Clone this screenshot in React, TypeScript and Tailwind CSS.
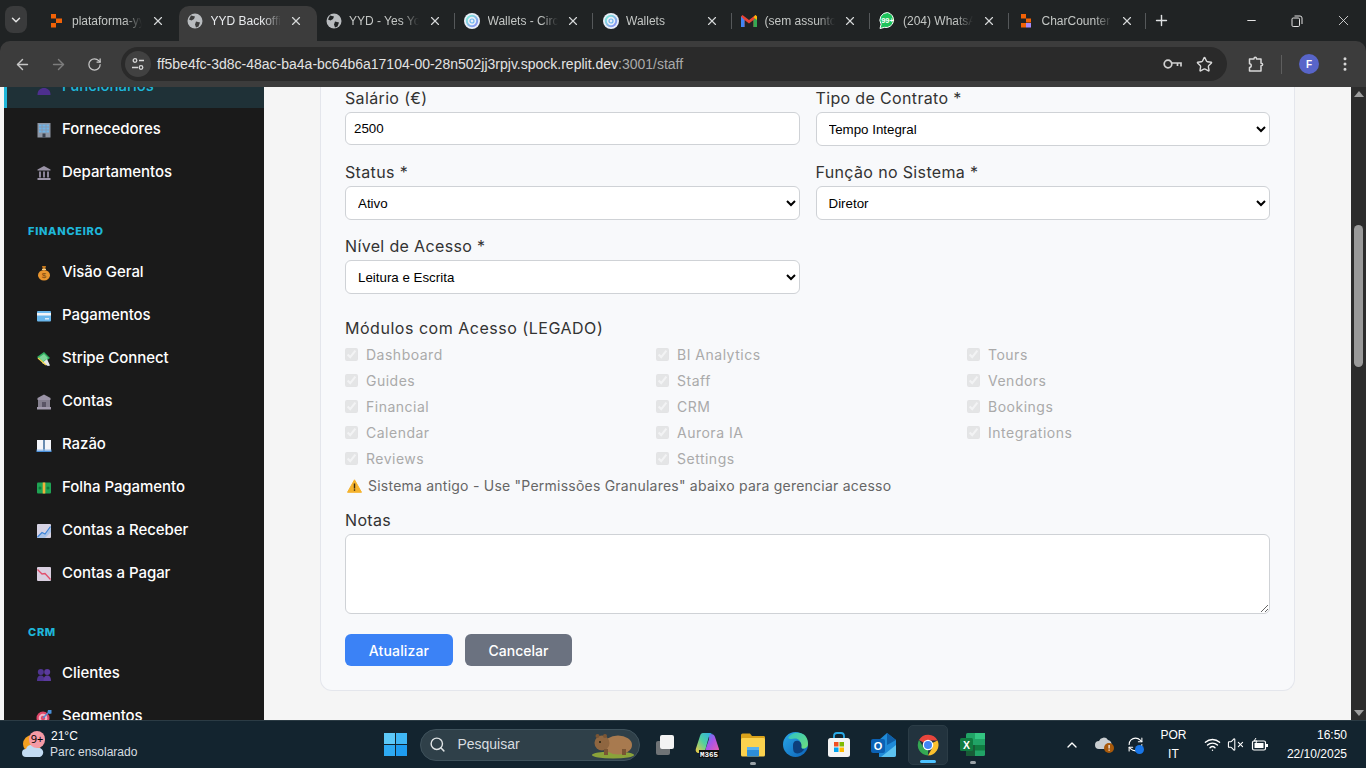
import React from "react";
import { X, Plus, ChevronDown, ArrowLeft, ArrowRight, RotateCw, Star, Minus, Search, ChevronUp, Wifi, VolumeX, EllipsisVertical, RefreshCw } from "lucide-react";

const Cubes = () => (
  <svg width="16" height="16" viewBox="0 0 16 16">
    <rect x="2" y="1" width="5" height="4.5" fill="#f26207" />
    <rect x="7" y="5.5" width="6" height="4.5" fill="#f26207" />
    <rect x="2" y="10" width="5" height="4.5" fill="#f26207" />
  </svg>
);
const Cubes2 = () => (
  <svg width="16" height="16" viewBox="0 0 16 16">
    <rect x="3" y="1" width="5" height="4.5" fill="#f26207" />
    <rect x="8" y="5.5" width="5" height="4" fill="#f26207" />
    <rect x="3" y="10" width="5" height="4.5" fill="#f26207" />
    <rect x="8" y="10" width="5" height="4.5" fill="#a78bfa" />
  </svg>
);
const GlobeIcon = () => (
  <svg width="16" height="16" viewBox="0 0 16 16">
    <circle cx="8" cy="8" r="7.5" fill="#b9bcbf" />
    <path d="M4 2.5 8 3.5 7 6 4.5 7.5 2 6.5ZM9 8.5l4 1-1.5 4-2.5 1-1-3Z" fill="#3c3c3c" />
  </svg>
);
const GlobeDark = () => (
  <svg width="16" height="16" viewBox="0 0 16 16">
    <circle cx="8" cy="8" r="7.5" fill="#b9bcbf" />
    <path d="M4 2.5 8 3.5 7 6 4.5 7.5 2 6.5ZM9 8.5l4 1-1.5 4-2.5 1-1-3Z" fill="#202324" />
  </svg>
);
const Circle = () => (
  <svg width="16" height="16" viewBox="0 0 16 16">
    <defs>
      <linearGradient id="cg" x1="0" y1="0" x2="1" y2="1">
        <stop offset="0" stopColor="#7ff0d8" />
        <stop offset="1" stopColor="#8b8cf5" />
      </linearGradient>
    </defs>
    <circle cx="8" cy="8" r="8" fill="#e9eef8" />
    <circle cx="8" cy="8" r="5.2" fill="none" stroke="url(#cg)" strokeWidth="2" />
    <circle cx="8" cy="8" r="2" fill="none" stroke="#6fb5ee" strokeWidth="1.2" />
  </svg>
);
const Gmail = () => (
  <svg width="16" height="14" viewBox="0 0 16 13">
    <path d="M0 2v10.5h3.5V5.5L8 9l4.5-3.5v7H16V2l-1.5-1.5L8 5.5 1.5.5Z" fill="#ea4335" />
    <path d="M0 2v10.5h3.5V5.5Z" fill="#4285f4" />
    <path d="M16 2v10.5h-3.5V5.5Z" fill="#34a853" />
    <path d="M12.5 2.8 14.5.5 16 2v3.5Z" fill="#fbbc04" />
  </svg>
);
const Whats = () => (
  <svg width="17" height="17" viewBox="0 0 17 17">
    <path d="M8.5.5a7.6 7.6 0 0 0-6.4 11.7L1 16.500l4.400-1.100A7.600 7.600 0 1 0 8.500.5Z" fill="#1fc45c" stroke="#fff" strokeWidth="1" />
    <text x="8.500" y="11" textAnchor="middle" fontSize="7.500" fontWeight="700" fill="#fff" fontFamily="Liberation Sans">99+</text>
  </svg>
);

const tabs = [
  { t: "plataforma-yyd", i: <Cubes /> },
  { t: "YYD Backoffice", i: <GlobeIcon />, active: true },
  { t: "YYD - Yes You Do", i: <GlobeDark /> },
  { t: "Wallets - Circle", i: <Circle />, sep: true },
  { t: "Wallets", i: <Circle />, sep: true },
  { t: "(sem assunto)", i: <Gmail />, sep: true },
  { t: "(204) WhatsApp", i: <Whats />, sep: true },
  { t: "CharCounter", i: <Cubes2 />, sep: true },
];

function TabStrip() {
  return (
    <div className="flex h-[41px] shrink-0 items-start bg-[#202324] font-['Liberation_Sans',sans-serif] text-[12px]">
      <div className="ml-[5px] mt-[6px] flex h-[27px] w-[22px] items-center justify-center rounded-lg bg-[#3a3b3c] text-[#e3e3e3]">
        <ChevronDown size={14} strokeWidth={2.5} />
      </div>
      <div className="ml-[13px] flex">
        {tabs.map((x) => (
          <div
            key={x.t}
            className={`relative flex w-[138.5px] items-center ${x.active ? "mt-[6px] h-[35px] rounded-t-[10px] bg-[#3c3c3c] pb-[6px] text-[#e8eaed]" : "h-[41px] text-[#c4c7c5]"}`}
          >
            {x.sep && <div className="absolute left-[-2px] top-[13px] h-[16px] w-px bg-[#55585a]" />}
            <div className="ml-[8px] flex w-[17px] justify-center">{x.i}</div>
            <div className="ml-[7px] w-[70px] overflow-hidden whitespace-nowrap [mask-image:linear-gradient(to_right,black_75%,transparent)]">
              {x.t}
            </div>
            <X size={14} strokeWidth={2} className="ml-[8.500px] text-[#d5d7d8]" />
          </div>
        ))}
      </div>
      <div className="relative ml-[-2px] mt-[12px] flex items-center text-[#dfe1e3]">
        <div className="absolute left-[-1px] top-[1px] h-[16px] w-px bg-[#55585a]" />
        <Plus size={17} className="ml-[7px]" />
      </div>
      <div className="ml-auto flex h-[41px] items-center text-[#e3e3e3]">
        <div className="flex w-[46px] justify-center"><Minus size={13} /></div>
        <div className="flex w-[46px] justify-center">
          <svg width="12" height="12" viewBox="0 0 12 12" fill="none" stroke="#e3e3e3" strokeWidth="1">
            <rect x="1" y="3" width="7.500" height="8.500" rx="1.200" />
            <path d="M3.500 1h5.500a2 2 0 0 1 2 2v6" />
          </svg>
        </div>
        <div className="flex w-[46px] justify-center"><X size={17} strokeWidth={1.2} /></div>
      </div>
    </div>
  );
}

function Toolbar() {
  return (
    <div className="flex h-[46px] shrink-0 items-center rounded-t-[10px] bg-[#3c3c3c] text-[#c7c7c7]">
      <div className="flex w-[40px] justify-center pl-[4px]"><ArrowLeft size={17} strokeWidth={2} /></div>
      <div className="flex w-[36px] justify-center text-[#7d7d7d]"><ArrowRight size={17} strokeWidth={2} /></div>
      <div className="flex w-[36px] justify-center"><RotateCw size={15} strokeWidth={2} /></div>
      <div className="ml-[9px] flex h-[34px] w-[1106px] items-center rounded-full bg-[#2a2a2a]">
        <div className="ml-[4px] flex h-[26px] w-[26px] items-center justify-center rounded-full bg-[#414141]">
          <svg width="14" height="14" viewBox="0 0 14 14" fill="none" stroke="#d8d8d8" strokeWidth="1.300">
            <circle cx="4" cy="3.500" r="1.800" />
            <path d="M8 3.500h5M1 10.500h6" />
            <circle cx="10" cy="10.500" r="1.800" />
          </svg>
        </div>
        <div className="ml-[6px] font-['Liberation_Sans',sans-serif] text-[14px] text-[#e3e3e3]">
          ff5be4fc-3d8c-48ac-ba4a-bc64b6a17104-00-28n502jj3rpjv.spock.replit.dev<span className="text-[#a9a9a9]">:3001/staff</span>
        </div>
        <div className="ml-auto flex items-center gap-[14px] pr-[14px]">
          <svg width="19" height="14" viewBox="0 0 19 14" fill="none" stroke="#d0d0d0" strokeWidth="1.700">
            <circle cx="5" cy="7" r="3.800" />
            <path d="M8.800 6h9.200v3.500M14.500 6v3" />
          </svg>
          <Star size={17} strokeWidth={2} className="text-[#d8d8d8]" />
        </div>
      </div>
      <div className="ml-[20px] flex items-center">
        <svg width="18" height="18" viewBox="0 0 18 18" fill="none" stroke="#d8d8d8" strokeWidth="1.500" strokeLinejoin="round">
          <path d="M2.500 4H7c0-2.200 2.500-2.200 2.500 0h4.500v4.200c2.200 0 2.200 2.600 0 2.600V16H2.500v-3.500c2.300 0 2.300-3.800 0-3.800Z" />
        </svg>
        <div className="ml-[16px] h-[19px] w-px bg-[#5e5e5e]" />
        <div className="ml-[17px] flex h-[20px] w-[20px] items-center justify-center rounded-full bg-[#5865c9] font-['Liberation_Sans',sans-serif] text-[10px] font-bold text-white">F</div>
        <EllipsisVertical size={18} className="ml-[17px] text-[#d8d8d8]" />
      </div>
    </div>
  );
}

const Em = ({ children }: { children: React.ReactNode }) => (
  <svg width="16" height="16" viewBox="0 0 16 16">{children}</svg>
);
const icons: Record<string, React.ReactNode> = {
  person: <Em><circle cx="8" cy="4" r="3.500" fill="#5b3a9e" /><path d="M1.500 16c0-5 3-7 6.500-7s6.500 2 6.500 7Z" fill="#4d2f8e" /></Em>,
  office: <Em><rect x="1.500" y="1" width="13" height="14.500" fill="#8e96a4" /><rect x="3" y="2.500" width="10" height="8" fill="#6fb4e8" /><path d="M3 5h10M3 8h10M6 2.500v8M10 2.500v8" stroke="#8e96a4" strokeWidth=".8" /><rect x="6.500" y="11.500" width="3" height="4" fill="#3b4350" /></Em>,
  bank: <Em><path d="M8 1 1.500 4.500v1h13v-1Z" fill="#9a93a6" /><path d="M3 6.500h2v6H3ZM7 6.500h2v6H7ZM11 6.500h2v6h-2Z" fill="#8a8396" /><rect x="1.500" y="13" width="13" height="2" fill="#9a93a6" /></Em>,
  money: <Em><path d="M6 1h4L9 4.500H7Z" fill="#c77a1e" /><ellipse cx="8" cy="10.200" rx="6" ry="5.300" fill="#e8952f" /><rect x="6" y="3.800" width="4" height="1.200" fill="#f4d28f" /><text x="8" y="13" textAnchor="middle" fontSize="8" fill="#7a4710" fontFamily="Liberation Sans">$</text></Em>,
  card: <Em><rect x="1" y="3" width="14" height="10.500" rx="1" fill="#6ab7ec" /><rect x="1" y="5" width="14" height="2.500" fill="#f3f4f6" /><rect x="9" y="10" width="4" height="1.500" fill="#d8eaf8" /></Em>,
  wing: <Em><path d="M1 6 8 1l6 6-7 5Z" fill="#2fae60" /><path d="M3 6.500 8 3l4 4-5 3.500Z" fill="#7ed69a" /><path d="M6 12l5-4 3 6.500-2 .5Z" fill="#e5e7eb" /><path d="M2 7l8 7" stroke="#f6d44b" strokeWidth="1.300" /></Em>,
  bank2: <Em><path d="M8 .5 1.500 4v2h13V4Z" fill="#9a93a6" /><rect x="2" y="6" width="12" height="7" fill="#85808f" /><rect x="6" y="8" width="4" height="5" fill="#5a5565" /><rect x="1" y="13" width="14" height="2.500" fill="#a29bad" /></Em>,
  book: <Em><path d="M1 3h6.500v10.500H1ZM8.500 3H15v10.500H8.500Z" fill="#f3f5fa" /><path d="M0.500 12.500v2.500h15v-2.500" fill="#4a8fd8" /><rect x="7.500" y="3" width="1" height="11.500" fill="#4a8fd8" /><path d="M1 13h6.500M8.500 13H15" stroke="#f3f5fa" /></Em>,
  cash: <Em><rect x="1" y="2.500" width="14" height="11" rx="1" fill="#1fa353" /><circle cx="4" cy="8" r="1.500" fill="#0e7a3a" /><circle cx="12" cy="8" r="1.500" fill="#0e7a3a" /><rect x="6.700" y="2.500" width="2.600" height="11" fill="#f0b13c" /></Em>,
  up: <Em><rect x="1" y="1" width="14" height="14" rx="1" fill="#d6d3e4" /><path d="M1 15 6 9.500l3 1.500L15 3v6l-5 5-1 1Z" fill="#a9c3e8" /><path d="M1.500 14 6 9.500l3 1.500 5.500-7.500" fill="none" stroke="#3d84d8" strokeWidth="1.200" /></Em>,
  down: <Em><rect x="1" y="1" width="14" height="14" rx="1" fill="#d9cfe0" /><path d="M1.500 3.500 6 8l3-.5 5.500 6" fill="none" stroke="#e24d6a" strokeWidth="1.300" /></Em>,
  people: <Em><circle cx="4.800" cy="6" r="3" fill="#4f3490" /><circle cx="11.200" cy="6" r="3" fill="#5b3a9e" /><path d="M1 15c0-4 1.500-5.500 3.800-5.500S8.500 11 8.500 15Z" fill="#4f3490" /><path d="M7.500 15c0-4 1.500-5.500 3.700-5.500S15 11 15 15Z" fill="#5b3a9e" /></Em>,
  target: <Em><circle cx="7" cy="9" r="6.500" fill="#e0476a" /><circle cx="7" cy="9" r="4.300" fill="#f3b5c4" /><circle cx="7" cy="9" r="2.200" fill="#e0476a" /><path d="M7 9 14 2" stroke="#4a8fd8" strokeWidth="1.500" /><path d="M12 1h3.500v3.500l-2 .5-2-2Z" fill="#4a8fd8" /></Em>,
};

function NavItem({ label, icon, active }: { label: string; icon: string; active?: boolean }) {
  return (
    <div className={`flex h-[43px] shrink-0 items-center text-[15px] font-medium tracking-[-0.05px] ${active ? "border-l-[3px] border-[#1fb6d9] bg-[#1f3137] pl-[29px] text-[#1fb6d9]" : "pl-[32px] text-white"}`}>
      <div className="flex w-[16px] justify-center">{icons[icon]}</div>
      <span className="ml-[10px]">{label}</span>
    </div>
  );
}
const Section = ({ t, top }: { t: string; top: string }) => (
  <div className={`pl-[24px] text-[11px] font-extrabold leading-[14px] tracking-[0.7px] text-[#1fb6d9] ${top}`}>{t}</div>
);

function Sidebar() {
  return (
    <div className="ml-[4px] w-[260px] shrink-0 overflow-hidden bg-[#1a1a1a] pt-0">
      <div className="-mt-[22px] flex flex-col">
        <NavItem label="Funcionários" icon="person" active />
        <NavItem label="Fornecedores" icon="office" />
        <NavItem label="Departamentos" icon="bank" />
        <Section t="FINANCEIRO" top="mt-[30px] mb-[13px]" />
        {[["Visão Geral", "money"], ["Pagamentos", "card"], ["Stripe Connect", "wing"], ["Contas", "bank2"], ["Razão", "book"], ["Folha Pagamento", "cash"], ["Contas a Receber", "up"], ["Contas a Pagar", "down"]].map(([l, i]) => (
          <NavItem key={l} label={l} icon={i} />
        ))}
        <Section t="CRM" top="mt-[30px] mb-[13px]" />
        <NavItem label="Clientes" icon="people" />
        <NavItem label="Segmentos" icon="target" />
      </div>
    </div>
  );
}

const inputCls = "w-full rounded-[6px] border border-[#cfd2d6] bg-white font-['Liberation_Sans',sans-serif] text-[13.333px] text-black";

function Field({ label, children }: { label: string; children: React.ReactNode }) {
  return (
    <div className="mb-[16px]">
      <div className="mb-[4px] h-[20px] text-[16px] leading-[20px] tracking-[0.35px] text-[#333]">{label}</div>
      {children}
    </div>
  );
}
const Sel = ({ v }: { v: string }) => (
  <select defaultValue={v} className={`${inputCls} h-[34px] pl-[8px] pr-[4px]`}>
    <option>{v}</option>
  </select>
);

const modules = ["Dashboard", "BI Analytics", "Tours", "Guides", "Staff", "Vendors", "Financial", "CRM", "Bookings", "Calendar", "Aurora IA", "Integrations", "Reviews", "Settings"];

function Warn() {
  return (
    <svg width="15" height="14" viewBox="0 0 15 14" className="mt-[1px]">
      <path d="M7.500 .8 14.500 13.300H.5Z" fill="#f5b32e" stroke="#f5b32e" strokeLinejoin="round" />
      <rect x="6.800" y="4.500" width="1.400" height="5" fill="#3a2a10" />
      <rect x="6.800" y="10.300" width="1.400" height="1.500" fill="#3a2a10" />
    </svg>
  );
}

function Main() {
  return (
    <div className="min-w-0 flex-1 overflow-hidden px-[56px]">
      <div className="rounded-b-[12px] border-x border-b border-[#e4e6ec] bg-[#f8f9fb] px-[24px] pb-[24px] pt-[1px]">
        <div className="grid grid-cols-2 gap-x-[16px]">
          <Field label="Salário (€)">
            <input readOnly value="2500" className={`${inputCls} mb-[1px] block h-[33px] px-[8px]`} />
          </Field>
          <Field label="Tipo de Contrato *"><Sel v="Tempo Integral" /></Field>
          <Field label="Status *"><Sel v="Ativo" /></Field>
          <Field label="Função no Sistema *"><Sel v="Diretor" /></Field>
          <Field label="Nível de Acesso *"><Sel v="Leitura e Escrita" /></Field>
        </div>
        <div className="mt-[8px] h-[20px] text-[16px] leading-[20px] tracking-[0.52px] text-[#333]">Módulos com Acesso (LEGADO)</div>
        <div className="mt-[3px] grid grid-cols-3 gap-x-[8px]">
          {modules.map((m) => (
            <label key={m} className="flex h-[26px] items-center text-[14px] tracking-[0.5px] text-[#aaa]">
              <input type="checkbox" checked disabled readOnly className="h-[13px] w-[13px] opacity-50" />
              <span className="ml-[8px]">{m}</span>
            </label>
          ))}
        </div>
        <div className="mt-[4px] flex h-[20px] items-center text-[14px] tracking-[0.23px] text-[#666]">
          <span className="ml-[2px] flex"><Warn /></span>
          <span className="ml-[6px]">Sistema antigo - Use "Permissões Granulares" abaixo para gerenciar acesso</span>
        </div>
        <div className="mb-[4px] mt-[15px] h-[20px] text-[16px] leading-[20px] tracking-[0.35px] text-[#333]">Notas</div>
        <textarea readOnly className="block h-[80px] w-full rounded-[6px] border border-[#cfd2d6] bg-white" />
        <div className="mt-[20px] flex gap-[12px] text-[14px] font-medium text-white">
          <div className="flex h-[32px] w-[108px] items-center justify-center rounded-[6px] bg-[#3b82f6] tracking-[0.15px]">Atualizar</div>
          <div className="flex h-[32px] w-[107px] items-center justify-center rounded-[6px] bg-[#6b7280]">Cancelar</div>
        </div>
      </div>
    </div>
  );
}

function Scrollbar() {
  return (
    <div className="flex w-[15px] shrink-0 flex-col items-center bg-[#2c2c2c]">
      <div className="mt-[4px] h-0 w-0 border-x-[5px] border-b-[6px] border-x-transparent border-b-[#9d9d9d]" />
      <div className="mt-[128px] h-[142px] w-[9px] rounded-full bg-[#9a9a9a]" />
      <div className="mb-[4px] mt-auto h-0 w-0 border-x-[5px] border-t-[6px] border-x-transparent border-t-[#9d9d9d]" />
    </div>
  );
}

const M365 = () => (
  <svg width="26" height="28" viewBox="0 0 26 28">
    <defs>
      <linearGradient id="m1" x1="0" y1="0" x2="1" y2="1"><stop offset="0" stopColor="#3f8ff0" /><stop offset=".45" stopColor="#a855e8" /><stop offset="1" stopColor="#f35fa5" /></linearGradient>
      <linearGradient id="m2" x1="1" y1="0" x2="0" y2="1"><stop offset="0" stopColor="#2aa8ee" /><stop offset=".5" stopColor="#4fd0a0" /><stop offset="1" stopColor="#f9c83c" /></linearGradient>
    </defs>
    <path d="M13 3h3c2 0 3.500 1.200 4 3l4 12c.6 2-.8 4-3 4h-8c-2 0-3-2-2.400-4L14 8c.4-1.500 0-4-1-5Z" fill="url(#m1)" />
    <path d="M8 2h10c-2 0-3.500 1.500-4.200 4l-3.300 12c-.6 2.500-2.300 4-4.500 4H3.500c-2 0-3.300-2-2.700-4L5 5c.5-2 1.500-3 3-3Z" fill="url(#m2)" />
    <rect x="4" y="19" width="20" height="8" fill="#111" />
    <text x="14" y="26" textAnchor="middle" fontSize="7.500" fill="#fff" fontWeight="700" fontFamily="Liberation Mono">M365</text>
  </svg>
);
const Folder = () => (
  <svg width="26" height="26" viewBox="0 0 26 26">
    <path d="M1 3a1.500 1.500 0 0 1 1.500-1.500H10L12 4h12a1.500 1.500 0 0 1 1 1.500V8H1Z" fill="#d9a21b" />
    <rect x="1" y="6" width="24" height="18.500" rx="1.500" fill="#fbd24e" />
    <rect x="7" y="15" width="12" height="9.500" rx="1" fill="#2d8ed8" />
    <rect x="7" y="15" width="12" height="3" fill="#58b2ee" />
  </svg>
);
const Edge = () => (
  <svg width="25" height="25" viewBox="0 0 25 25">
    <defs>
      <linearGradient id="e1" x1="0" y1="0" x2="1" y2="1"><stop offset="0" stopColor="#2aa8e8" /><stop offset="1" stopColor="#0c62b8" /></linearGradient>
      <linearGradient id="e2" x1="0" y1="0" x2="1" y2="1"><stop offset="0" stopColor="#2fc2c4" /><stop offset="1" stopColor="#6fe07a" /></linearGradient>
    </defs>
    <circle cx="12.500" cy="12.500" r="12.500" fill="url(#e1)" />
    <path d="M5 6C8 .5 15-.5 20 2c3.500 2 5 6 5 10 0 2-1 4-3.500 4.500-3 .5-4-1-3.500-3C18.500 9 15 6 11.500 6.500 9 6.800 7 7.500 5 6Z" fill="url(#e2)" />
    <path d="M10 13c0-3.500 3-5 5.500-4 2 .8 3.500 3 3 5.500-.5 2 1 3 3 2.500-2 4-7 5.500-10 3.500-1.500-1-1.500-5-1.500-7.500Z" fill="#0d3f7c" />
  </svg>
);
const Store = () => (
  <svg width="24" height="26" viewBox="0 0 24 26">
    <path d="M7 7V4a3 3 0 0 1 3-3h4a3 3 0 0 1 3 3v3" fill="none" stroke="#29a9e6" strokeWidth="1.800" />
    <rect x="1" y="6" width="22" height="19" rx="2.500" fill="#f3f3f3" />
    <rect x="7" y="10" width="4.500" height="4.500" fill="#f25022" />
    <rect x="12.500" y="10" width="4.500" height="4.500" fill="#7fba00" />
    <rect x="7" y="15.500" width="4.500" height="4.500" fill="#00a4ef" />
    <rect x="12.500" y="15.500" width="4.500" height="4.500" fill="#ffb900" />
  </svg>
);
const Outlook = () => (
  <svg width="25" height="26" viewBox="0 0 25 26">
    <path d="M8 8l8-7 9 7v15a2 2 0 0 1-2 2H8Z" fill="#1f8ad8" />
    <path d="M16 1l9 7-9 5Z" fill="#0f5fa8" />
    <path d="M10 25l15-12v10a2 2 0 0 1-2 2Z" fill="#5cc2f0" />
    <rect x="0" y="7" width="14" height="14" rx="2" fill="#0b61b4" />
    <text x="7" y="18" textAnchor="middle" fontSize="11" fontWeight="700" fill="#fff" fontFamily="Liberation Sans">O</text>
  </svg>
);
const Chrome = () => (
  <svg width="24" height="24" viewBox="0 0 48 48">
    <path d="M24 24 6 14A21 21 0 0 1 43 15H24Z" fill="#e8453c" />
    <path d="M24 24 43 15A21 21 0 0 1 24 45L33 29Z" fill="#fbc02d" />
    <path d="M24 24 24 45A21 21 0 0 1 6 14L15 29Z" fill="#34a853" />
    <circle cx="24" cy="24" r="10.500" fill="#fff" />
    <circle cx="24" cy="24" r="8" fill="#4285f4" />
  </svg>
);
const Excel = () => (
  <svg width="25" height="25" viewBox="0 0 25 25">
    <rect x="6" y="1" width="19" height="23" rx="1.500" fill="#21a366" />
    <rect x="15" y="1" width="10" height="6" fill="#33c481" />
    <rect x="15" y="13" width="10" height="5.500" fill="#107c41" />
    <rect x="6" y="13" width="9" height="11" fill="#185c37" />
    <rect x="0" y="6" width="13" height="13" rx="1.500" fill="#107c41" />
    <text x="6.500" y="16.500" textAnchor="middle" fontSize="10.500" fontWeight="700" fill="#fff" fontFamily="Liberation Sans">X</text>
  </svg>
);
const Wombat = () => (
  <svg width="44" height="30" viewBox="0 0 44 30">
    <ellipse cx="22" cy="26" rx="21" ry="3.500" fill="#8aa33a" />
    <ellipse cx="27" cy="16" rx="14" ry="9.500" fill="#a87a4f" />
    <ellipse cx="11" cy="14" rx="7.500" ry="7.500" fill="#8f6640" />
    <circle cx="6.500" cy="7" r="2" fill="#7a5534" />
    <circle cx="14" cy="7" r="2" fill="#7a5534" />
    <circle cx="9" cy="13" r="1" fill="#221" />
    <rect x="13" y="20" width="4" height="6" fill="#7a5534" />
    <rect x="31" y="20" width="4" height="6" fill="#7a5534" />
  </svg>
);

function Taskbar() {
  return (
    <div className="relative flex h-[48px] shrink-0 items-center border-t border-[#2b3b44] bg-[#13242f] font-['Noto_Sans',sans-serif] text-[12px] text-white">
      <div className="relative ml-[21px] h-[30px] w-[30px]">
        <svg width="26" height="26" viewBox="0 0 26 26" className="absolute left-0 top-[5px]">
          <circle cx="11" cy="9" r="9" fill="#f5a020" />
          <path d="M5 22a4 4 0 0 1 0-8 6 6 0 0 1 11-1 4.500 4.500 0 0 1 3 9Z" fill="#c3dcf3" />
        </svg>
        <div className="absolute left-[8px] top-[1px] flex h-[17px] w-[16px] items-center justify-center rounded-full bg-[#f59aa5] text-[11px] text-black">9+</div>
      </div>
      <div className="-ml-[0px] flex flex-col font-['Liberation_Sans',sans-serif] leading-[16px]">
        <span className="-mt-[1px] font-normal">21°C</span>
        <span className="-ml-[1px] text-[#d7dde0]">Parc ensolarado</span>
      </div>
      <div className="ml-[247px] grid h-[23px] w-[23px] grid-cols-2 gap-[1px]">
        <div className="bg-[#5cc8f8]" /><div className="bg-[#3fb6f5]" /><div className="bg-[#2eaaf3]" /><div className="bg-[#1e9cf0]" />
      </div>
      <div className="ml-[13px] flex h-[32px] w-[220px] items-center rounded-full border border-[#3f525c] bg-[#2f4049]">
        <Search size={17} className="ml-[8px] text-[#e0e4e6]" />
        <span className="ml-[11px] font-['Liberation_Sans',sans-serif] text-[14px] text-[#d8dde0]">Pesquisar</span>
        <div className="ml-auto mr-[4px] mt-[-1px]"><Wombat /></div>
      </div>
      <div className="ml-[13px] flex w-[24px] justify-center">
        <svg width="20" height="22" viewBox="0 0 20 22">
          <rect x="1" y="7" width="14" height="14" rx="2" fill="#6f7376" />
          <rect x="5" y="1" width="14" height="14" rx="2" fill="#f3f3f3" />
        </svg>
      </div>
      <div className="ml-[18px] flex w-[26px] justify-center"><M365 /></div>
      <div className="relative ml-[19px] flex w-[26px] justify-center">
        <Folder />
        <div className="absolute bottom-[-7px] h-[3px] w-[6px] rounded-full bg-[#9aa3a8]" />
      </div>
      <div className="ml-[17px] flex w-[25px] justify-center"><Edge /></div>
      <div className="ml-[19px] flex w-[24px] justify-center"><Store /></div>
      <div className="ml-[20px] flex w-[25px] justify-center"><Outlook /></div>
      <div className="relative ml-[12px] flex h-[40px] w-[40px] items-center justify-center rounded-[5px] border border-[#2b3c46] bg-[#22333e]">
        <Chrome />
        <div className="absolute bottom-[1px] h-[3px] w-[16px] rounded-full bg-[#4cc2ff]" />
      </div>
      <div className="relative ml-[12px] flex w-[25px] justify-center">
        <Excel />
        <div className="absolute bottom-[-7px] h-[3px] w-[6px] rounded-full bg-[#9aa3a8]" />
      </div>
      <ChevronUp size={16} strokeWidth={2} className="ml-[79px]" />
      <svg width="20" height="18" viewBox="0 0 20 18" className="ml-[15px]">
        <path d="M4 13a4 4 0 0 1 0-8 5 5 0 0 1 9-1 4 4 0 0 1 3 6v3Z" fill="#c9ced1" />
        <circle cx="14" cy="12" r="5" fill="#a8590a" />
        <rect x="13.500" y="9" width="1.200" height="3.500" fill="#fff" />
        <rect x="13.500" y="13.500" width="1.200" height="1.200" fill="#fff" />
      </svg>
      <div className="relative ml-[11px] flex h-[20px] w-[18px] items-center justify-center">
        <RefreshCw size={17} strokeWidth={1.500} />
        <div className="absolute bottom-[1px] right-[0px] h-[9px] w-[9px] rounded-full bg-[#1976e8]" />
      </div>
      <div className="ml-[16px] flex w-[26px] flex-col items-center font-['Liberation_Sans',sans-serif] text-[12px] leading-[19px]">
        <span>POR</span>
        <span>IT</span>
      </div>
      <Wifi size={17} strokeWidth={2} className="ml-[18px]" />
      <VolumeX size={17} strokeWidth={1.500} className="ml-[6px]" />
      <svg width="18" height="16" viewBox="0 0 18 16" fill="none" stroke="#fff" strokeWidth="1.200" className="ml-[7px]">
        <rect x="1.500" y="4" width="13" height="9" rx="1.500" />
        <rect x="3.500" y="6" width="9" height="5" fill="#fff" stroke="none" />
        <path d="M16 7v3" strokeWidth="2" />
        <path d="M5 1 3 4h3L4.500 7" strokeWidth="1" />
      </svg>
      <div className="ml-auto mr-[19px] flex flex-col items-end font-['Liberation_Sans',sans-serif] text-[12px] leading-[19px]">
        <span>16:50</span>
        <span>22/10/2025</span>
      </div>
    </div>
  );
}

export default function App() {
  return (
    <div className="flex h-screen w-screen flex-col overflow-hidden bg-[#f5f5f5] font-['Inter',sans-serif]">
      <div className="shrink-0 bg-[#202324]">
        <TabStrip />
        <Toolbar />
      </div>
      <div className="flex min-h-0 flex-1">
        <Sidebar />
        <Main />
        <Scrollbar />
      </div>
      <Taskbar />
    </div>
  );
}
